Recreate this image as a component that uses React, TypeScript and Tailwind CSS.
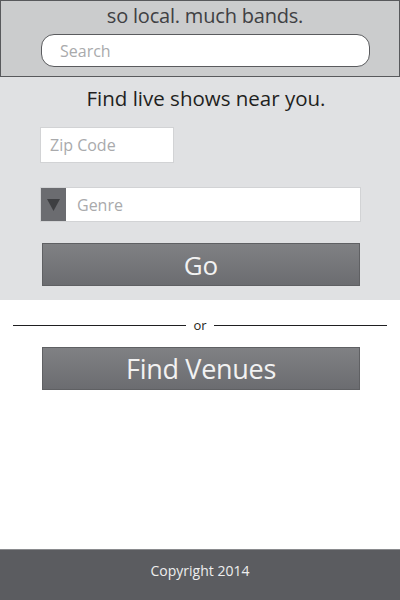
import React from "react";

export default function App() {
    return (
        <div className="w-[400px] h-[600px] flex flex-col bg-white font-['Open_Sans',sans-serif]">
            {/* Header */}
            <div className="h-[77px] shrink-0 bg-[#cbcccd] border border-[#58595c] flex flex-col">
                <h1 className="mt-[3px] pl-[10px] text-center text-[20px] leading-[24px] text-[#3f4043] tracking-[-0.2px]">so local. much bands.</h1>
                <div className="mt-[6px] ml-[40px] w-[329px] h-[33px] bg-white border border-[#5a5b5e] rounded-[13px] flex items-center pl-[18px]">
                    <span className="text-[16px] text-[#a9aaac]">Search</span>
                </div>
            </div>

            {/* Search form */}
            <div className="h-[223px] shrink-0 bg-[#e0e1e3] flex flex-col">
                <p className="mt-[8px] pl-[12px] text-center text-[20.5px] leading-[26px] text-[#1f1f21]">Find live shows near you.</p>
                <div className="mt-[16px] ml-[40px] w-[134px] h-[36px] bg-white border border-[#d2d3d5] flex items-center pl-[9px]">
                    <span className="text-[16px] text-[#a9aaac]">Zip Code</span>
                </div>
                <div className="mt-[24px] ml-[40px] w-[321px] h-[35px] bg-white border border-[#d2d3d5] flex items-center">
                    <div className="w-[25px] h-full bg-[#6b6c70] flex items-center justify-center">
                        <svg width="13" height="12" viewBox="0 0 13 12">
                            <path d="M0 0 L13 0 L6.5 12 Z" fill="#3e3f42" />
                        </svg>
                    </div>
                    <span className="ml-[11px] text-[16px] text-[#a9aaac]">Genre</span>
                </div>
                <button className="mt-[21px] ml-[42px] w-[318px] h-[43px] bg-gradient-to-t from-[#6b6c70] to-[#808184] border border-[#5f6063] flex items-center justify-center">
                    <span className="text-[26px] text-[#f2f2f2] leading-none">Go</span>
                </button>
            </div>

            {/* Alt */}
            <div className="flex-1 flex flex-col">
                <div className="mt-[17px] flex items-center px-[13px] gap-[7px]">
                    <div className="flex-1 h-px bg-[#1f1f21]" />
                    <span className="text-[13px] leading-[16px] text-[#1f1f21]">or</span>
                    <div className="flex-1 h-px bg-[#1f1f21]" />
                </div>
                <button className="mt-[14px] ml-[42px] w-[318px] h-[43px] bg-gradient-to-t from-[#6b6c70] to-[#808184] border border-[#5f6063] flex items-center justify-center">
                    <span className="text-[27px] text-[#f2f2f2] leading-none tracking-[-0.3px]">Find Venues</span>
                </button>
            </div>

            {/* Footer */}
            <div className="h-[51px] shrink-0 bg-[#5b5c60] border-t border-[#8a8b8e] flex items-center justify-center">
                <span className="text-[14px] text-[#eeeeee] pb-[10px]">Copyright 2014</span>
            </div>
        </div>
    );
}
